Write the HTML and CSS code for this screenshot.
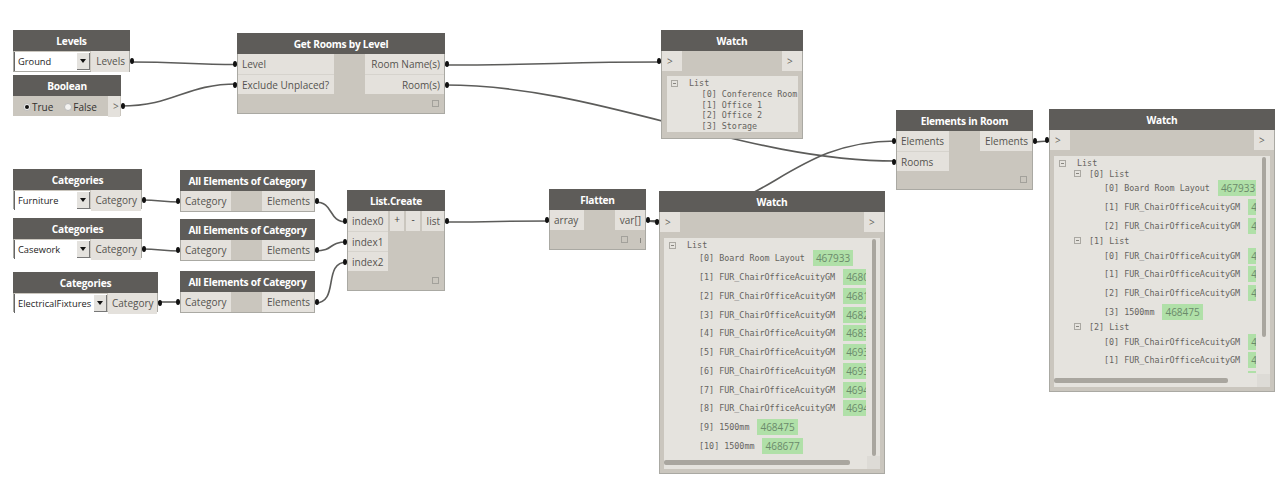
FILE: index.html
```html
<!DOCTYPE html>
<html lang="en">
<head>
    <meta charset="UTF-8">
    <title>Dynamo graph</title>
    <link rel="stylesheet" href="styles.css">
</head>
<body>
<div class="canvas">
    <svg class="wires" width="1286" height="487">
        <path d="M131 62 C180 62 190 64.500 237 64.500"/>
        <path d="M121 106 C175 106 185 84 237 84"/>
        <path d="M445 65 C550 65 560 62 661 62"/>
        <path d="M445 85 C600 85 740 161 896 161"/>
        <path d="M646 221 C765 221 785 141 896 141"/>
        <path d="M646 221 C652 221 653 222 659 222"/>
        <path d="M1033 142 C1040 142 1042 141 1049 141"/>
        <path d="M142 200 C160 200 162 202 180 202"/>
        <path d="M142 249 C160 249 162 251 180 251"/>
        <path d="M158 302 C170 302 170 302 180 302"/>
        <path d="M315 202 C335 202 327 222 347 222"/>
        <path d="M315 251 C335 251 327 242 347 242"/>
        <path d="M315 303 C340 303 322 262 347 262"/>
        <path d="M445 222 C500 222 495 221 549 221"/>
    </svg>

    <div class="node n-levels">
        <div class="title">Levels</div>
        <div class="input-row">
            <div class="combo"><span class="combo-text">Ground</span><span class="combo-btn"></span></div>
            <div class="port out">Levels</div>
        </div>
    </div>

    <div class="node n-boolean">
        <div class="title">Boolean</div>
        <div class="input-row">
            <div class="radios">
                <span class="radio checked"></span><span class="radio-label">True</span>
                <span class="radio"></span><span class="radio-label">False</span>
            </div>
            <div class="port out arrow">&gt;</div>
        </div>
    </div>

    <div class="node n-rooms">
        <div class="title">Get Rooms by Level</div>
        <div class="ports">
            <div class="col">
                <div class="port in">Level</div>
                <div class="port in">Exclude Unplaced?</div>
            </div>
            <div class="col">
                <div class="port out">Room Name(s)</div>
                <div class="port out">Room(s)</div>
            </div>
        </div>
        <div class="foot"><span class="freeze"></span></div>
    </div>

    <div class="node n-cat1">
        <div class="title">Categories</div>
        <div class="input-row">
            <div class="combo"><span class="combo-text">Furniture</span><span class="combo-btn"></span></div>
            <div class="port out">Category</div>
        </div>
    </div>
    <div class="node n-cat2">
        <div class="title">Categories</div>
        <div class="input-row">
            <div class="combo"><span class="combo-text">Casework</span><span class="combo-btn"></span></div>
            <div class="port out">Category</div>
        </div>
    </div>
    <div class="node n-cat3">
        <div class="title">Categories</div>
        <div class="input-row">
            <div class="combo"><span class="combo-text">ElectricalFixtures</span><span class="combo-btn"></span></div>
            <div class="port out">Category</div>
        </div>
    </div>

    <div class="node n-all n-all1">
        <div class="title">All Elements of Category</div>
        <div class="ports">
            <div class="port in">Category</div>
            <div class="port out">Elements</div>
        </div>
    </div>
    <div class="node n-all n-all2">
        <div class="title">All Elements of Category</div>
        <div class="ports">
            <div class="port in">Category</div>
            <div class="port out">Elements</div>
        </div>
    </div>
    <div class="node n-all n-all3">
        <div class="title">All Elements of Category</div>
        <div class="ports">
            <div class="port in">Category</div>
            <div class="port out">Elements</div>
        </div>
    </div>

    <div class="node n-create">
        <div class="title">List.Create</div>
        <div class="ports">
            <div class="col">
                <div class="port in">index0</div>
                <div class="port in">index1</div>
                <div class="port in">index2</div>
            </div>
            <div class="create-right">
                <span class="mini-btn">+</span>
                <span class="mini-btn">-</span>
                <div class="port out">list</div>
            </div>
        </div>
        <div class="foot"><span class="freeze"></span></div>
    </div>

    <div class="node n-flatten">
        <div class="title">Flatten</div>
        <div class="ports">
            <div class="port in">array</div>
            <div class="port out">var[]</div>
        </div>
        <div class="foot flatten-foot"><span class="freeze"></span><span class="lacing"></span></div>
    </div>

    <div class="node n-watch-small">
        <div class="title">Watch</div>
        <div class="ports">
            <div class="port in arrow">&gt;</div>
            <div class="port arrow">&gt;</div>
        </div>
        <div class="watch-body small-body">
            <div class="list-head"><span class="collapse"></span><span class="mono">List</span></div>
            <div class="short-row mono">[0] Conference Room</div>
            <div class="short-row mono">[1] Office 1</div>
            <div class="short-row mono">[2] Office 2</div>
            <div class="short-row mono">[3] Storage</div>
        </div>
    </div>

    <div class="node n-room">
        <div class="title">Elements in Room</div>
        <div class="ports">
            <div class="col">
                <div class="port in">Elements</div>
                <div class="port in">Rooms</div>
            </div>
            <div class="col">
                <div class="port out">Elements</div>
            </div>
        </div>
        <div class="foot"><span class="freeze"></span></div>
    </div>

    <div class="node n-watch-flat">
        <div class="title">Watch</div>
        <div class="ports">
            <div class="port in arrow">&gt;</div>
            <div class="port arrow">&gt;</div>
        </div>
        <div class="watch-body big-body">
            <div class="clip">
                <div class="list-head"><span class="collapse"></span><span class="mono">List</span></div>
                <div class="row"><span class="mono">[0] Board Room Layout</span><span class="badge">467933</span></div>
                <div class="row"><span class="mono">[1] FUR_ChairOfficeAcuityGM</span><span class="badge">468033</span></div>
                <div class="row"><span class="mono">[2] FUR_ChairOfficeAcuityGM</span><span class="badge">468137</span></div>
                <div class="row"><span class="mono">[3] FUR_ChairOfficeAcuityGM</span><span class="badge">468241</span></div>
                <div class="row"><span class="mono">[4] FUR_ChairOfficeAcuityGM</span><span class="badge">468345</span></div>
                <div class="row"><span class="mono">[5] FUR_ChairOfficeAcuityGM</span><span class="badge">469310</span></div>
                <div class="row"><span class="mono">[6] FUR_ChairOfficeAcuityGM</span><span class="badge">469351</span></div>
                <div class="row"><span class="mono">[7] FUR_ChairOfficeAcuityGM</span><span class="badge">469412</span></div>
                <div class="row"><span class="mono">[8] FUR_ChairOfficeAcuityGM</span><span class="badge">469453</span></div>
                <div class="row"><span class="mono">[9] 1500mm</span><span class="badge">468475</span></div>
                <div class="row"><span class="mono">[10] 1500mm</span><span class="badge">468677</span></div>
            </div>
            <span class="vbar"></span>
            <span class="hbar"></span>
            <span class="corner"></span>
        </div>
    </div>

    <div class="node n-watch-room">
        <div class="title">Watch</div>
        <div class="ports">
            <div class="port in arrow">&gt;</div>
            <div class="port arrow">&gt;</div>
        </div>
        <div class="watch-body big-body">
            <div class="clip">
                <div class="list-head"><span class="collapse"></span><span class="mono">List</span></div>
                <div class="sub-head"><span class="collapse"></span><span class="mono">[0] List</span></div>
                <div class="row deep"><span class="mono">[0] Board Room Layout</span><span class="badge">467933</span></div>
                <div class="row deep"><span class="mono">[1] FUR_ChairOfficeAcuityGM</span><span class="badge">468033</span></div>
                <div class="row deep"><span class="mono">[2] FUR_ChairOfficeAcuityGM</span><span class="badge">468137</span></div>
                <div class="sub-head"><span class="collapse"></span><span class="mono">[1] List</span></div>
                <div class="row deep"><span class="mono">[0] FUR_ChairOfficeAcuityGM</span><span class="badge">468241</span></div>
                <div class="row deep"><span class="mono">[1] FUR_ChairOfficeAcuityGM</span><span class="badge">468345</span></div>
                <div class="row deep"><span class="mono">[2] FUR_ChairOfficeAcuityGM</span><span class="badge">469310</span></div>
                <div class="row deep"><span class="mono">[3] 1500mm</span><span class="badge">468475</span></div>
                <div class="sub-head"><span class="collapse"></span><span class="mono">[2] List</span></div>
                <div class="row deep"><span class="mono">[0] FUR_ChairOfficeAcuityGM</span><span class="badge">469351</span></div>
                <div class="row deep"><span class="mono">[1] FUR_ChairOfficeAcuityGM</span><span class="badge">469412</span></div>
                <div class="row deep"><span class="mono">[2] FUR_ChairOfficeAcuityGM</span><span class="badge">469453</span></div>
            </div>
            <span class="vbar short"></span>
            <span class="hbar short"></span>
            <span class="corner"></span>
        </div>
    </div>
</div>
</body>
</html>
```
FILE: styles.css
```css
* {
    box-sizing: border-box;
}
html, body {
    margin: 0;
    padding: 0;
    background-color: #fff;
}
body {
    font-family: "Open Sans", "Liberation Sans", sans-serif;
    font-size: 10px;
    color: #55534f;
    overflow: hidden;
}
.canvas {
    position: relative;
    width: 1286px;
    height: 487px;
    overflow: hidden;
}
.wires {
    position: absolute;
    left: 0;
    top: 0;
}
.wires path {
    fill: none;
    stroke: #5c5c5a;
    stroke-width: 1.6;
}

/* nodes */
.node {
    position: absolute;
    background-color: #cac6be;
    border: 1px solid #aaa9a3;
    display: flex;
    flex-direction: column;
}
.title {
    height: 21px;
    flex: none;
    margin: -1px -1px 0;
    padding-top: 1px;
    background-color: #5e5c59;
    color: #fff;
    font-weight: 700;
    font-size: 10.2px;
    letter-spacing: -0.25px;
    line-height: 20px;
    text-align: center;
}
.n-levels { left: 13px; top: 30px; width: 117px; height: 42px; }
.n-boolean { left: 13px; top: 75px; width: 108px; height: 41px; border-color: #cac6be; }
.n-rooms { left: 237px; top: 33px; width: 208px; height: 81px; }
.n-cat1 { left: 13px; top: 169px; width: 129px; height: 40px; }
.n-cat2 { left: 13px; top: 218px; width: 129px; height: 40px; }
.n-cat3 { left: 13px; top: 272px; width: 145px; height: 40px; }
.n-all { left: 180px; width: 135px; height: 42px; }
.n-all1 { top: 170px; }
.n-all2 { top: 219px; }
.n-all3 { top: 271px; }
.n-create { left: 347px; top: 190px; width: 98px; height: 101px; }
.n-flatten { left: 549px; top: 189px; width: 97px; height: 61px; }
.n-watch-small { left: 661px; top: 30px; width: 142px; height: 109px; }
.n-room { left: 896px; top: 110px; width: 137px; height: 80px; }
.n-watch-flat { left: 659px; top: 191px; width: 226px; height: 283px; }
.n-watch-room { left: 1049px; top: 109px; width: 226px; height: 283px; }

/* ports */
.ports {
    display: flex;
    justify-content: space-between;
    flex: none;
}
.col {
    display: flex;
    flex-direction: column;
}
.port {
    position: relative;
    height: 20px;
    line-height: 21px;
    padding: 0 4px;
    background-color: #e4e1dc;
    white-space: nowrap;
}
.port.out {
    text-align: right;
}
.col .port + .port {
    border-top: 1px solid #d6d3cd;
}
.port.in::before,
.port.out::after {
    content: "";
    position: absolute;
    top: 7px;
    width: 4px;
    height: 6px;
    border-radius: 50%;
    background-color: #111;
}
.port.in::before {
    left: -5px;
}
.port.out::after {
    right: -5px;
}
.port.arrow {
    width: 20px;
    padding: 0 0 0 5px;
    font-size: 10px;
    text-align: left;
    color: #66645f;
}
.n-levels .port { width: 38px; }
.n-cat1 .port, .n-cat2 .port { width: 50px; }
.n-cat3 .port { width: 49px; }
.n-rooms .col:first-child .port { width: 96px; }
.n-rooms .col:last-child .port { width: 79px; }
.n-all .port.in { width: 50px; }
.n-all .port.out { width: 52px; }
.n-create .col .port { width: 40px; }
.n-create .port.out { width: 22px; }
.n-flatten .port.in { width: 34px; }
.n-flatten .port.out { width: 30px; }
.n-room .port { width: 52px; }

.foot {
    flex: 1;
    display: flex;
    align-items: flex-end;
    justify-content: flex-end;
    padding: 0 5px 6px 0;
}
.freeze {
    width: 7px;
    height: 7px;
    border: 1px solid #a3a19b;
}
.flatten-foot {
    padding: 0 4px 6px 0;
    gap: 12px;
}
.lacing {
    width: 1px;
    height: 5px;
    background-color: #8a8882;
}

/* input rows */
.input-row {
    display: flex;
    flex: 1;
    justify-content: space-between;
}
.input-row .port {
    height: auto;
}
.combo {
    display: flex;
    align-items: center;
    justify-content: space-between;
    margin: 1px 0;
    padding-left: 3px;
    width: 76px;
    background-color: #fff;
    border-left: 1px solid #666;
    color: #222;
    font-size: 9.300px;
}
.n-cat3 .combo {
    width: 93px;
}
.combo-text {
    white-space: nowrap;
}
.combo-btn {
    position: relative;
    width: 13px;
    height: 17px;
    background-color: #e4e2de;
    border-right: 1px solid #777;
    border-bottom: 1px solid #777;
}
.combo-btn::after {
    content: "";
    position: absolute;
    left: 3px;
    top: 6px;
    border-left: 3px solid transparent;
    border-right: 3px solid transparent;
    border-top: 4px solid #111;
}
.radios {
    display: flex;
    align-items: center;
    padding-left: 9px;
    color: #33312e;
}
.radio {
    position: relative;
    width: 8px;
    height: 8px;
    border-radius: 50%;
    background-color: #f4f3f1;
    border: 1px solid #bbb;
    margin-right: 1px;
}
.radio.checked::after {
    content: "";
    position: absolute;
    left: 1px;
    top: 1px;
    width: 4px;
    height: 4px;
    border-radius: 50%;
    background-color: #111;
}
.radio-label {
    margin-right: 11px;
}

/* list.create */
.create-right {
    display: flex;
    align-items: flex-start;
    gap: 2px;
}
.mini-btn {
    width: 14px;
    height: 20px;
    background-color: #e4e1dc;
    text-align: center;
    line-height: 17px;
    color: #44423f;
}

/* watch */
.watch-body {
    position: relative;
    background-color: #e5e3de;
    color: #66645f;
}
.mono {
    font-family: "DejaVu Sans Mono", "Liberation Mono", monospace;
    font-size: 8.4px;
    white-space: nowrap;
}
.small-body {
    margin: 5px 4px 0 5px;
    height: 56px;
    overflow: hidden;
}
.small-body .list-head {
    height: 12px;
    margin: 1px 0 0;
    padding-left: 4px;
}
.short-row {
    height: 10.6px;
    line-height: 10.6px;
    padding-left: 34.6px;
}
.big-body {
    margin: 6px 4px 0;
    height: 231px;
}
.clip {
    width: 202px;
    height: 217px;
    overflow: hidden;
}
.list-head {
    display: flex;
    align-items: center;
    height: 10px;
    margin: 2px 0 -1px;
    padding-left: 5px;
}
.n-watch-room .list-head {
    margin-bottom: 0;
}
.list-head .collapse {
    margin-right: 11px;
}
.collapse {
    width: 7px;
    height: 7px;
    flex: none;
    border: 1px solid #aaa8a2;
    position: relative;
}
.collapse::after {
    content: "";
    position: absolute;
    left: 1px;
    top: 2px;
    width: 3px;
    height: 1px;
    background-color: #888680;
}
.sub-head {
    display: flex;
    align-items: center;
    height: 11px;
    padding-left: 20px;
}
.sub-head .collapse {
    margin-right: 8px;
}
.row {
    display: flex;
    align-items: center;
    height: 18.750px;
    padding-left: 35px;
}
.row.deep {
    padding-left: 50px;
}
.row .badge {
    margin-left: 8px;
}
.badge {
    flex: none;
    height: 16px;
    line-height: 16px;
    padding: 0 3px;
    background-color: #b0e0a8;
    color: #6b8a6b;
    font-size: 10px;
}
.vbar {
    position: absolute;
    right: 4px;
    top: 1px;
    width: 4px;
    height: 217px;
    border-radius: 2px;
    background-color: #a9a69f;
}
.vbar.short {
    height: 180px;
}
.hbar {
    position: absolute;
    left: 0;
    bottom: 4px;
    width: 186px;
    height: 5px;
    border-radius: 2px;
    background-color: #a9a69f;
}
.hbar.short {
    width: 174px;
}
.corner {
    position: absolute;
    right: 0;
    bottom: 0;
    width: 13px;
    height: 13px;
    background-color: #dddbd6;
}
```
